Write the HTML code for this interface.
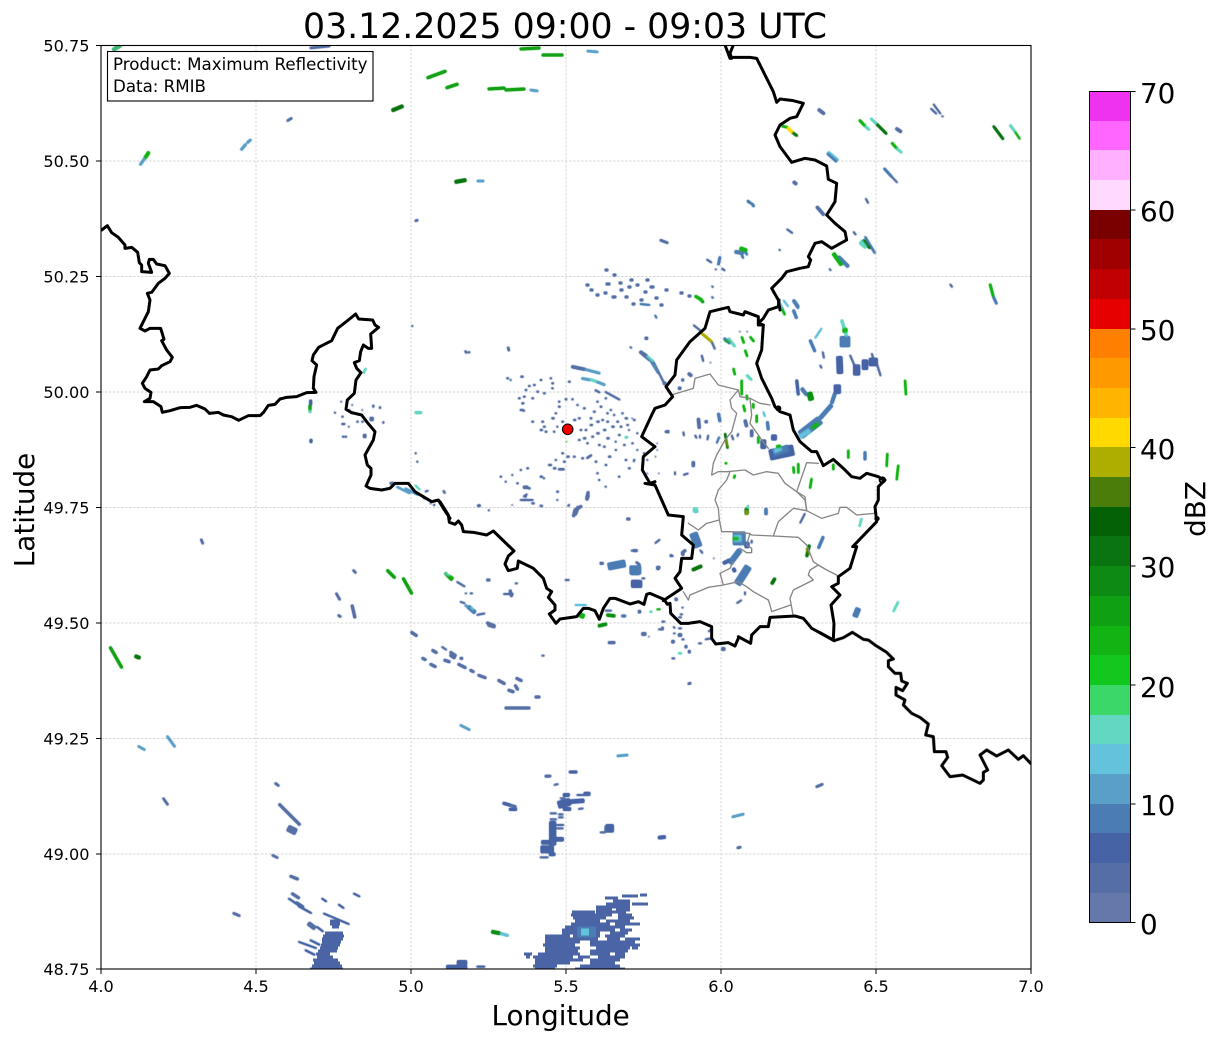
<!DOCTYPE html>
<html lang="en"><head><meta charset="utf-8"><title>Radar</title>
<style>
html,body{margin:0;padding:0;background:#fff;width:1219px;height:1040px;overflow:hidden}
svg{display:block}
text{font-family:"DejaVu Sans","Liberation Sans",sans-serif;fill:#000}
.t{font-size:16.67px}
.l{font-size:16.1px}
.c{font-size:27.8px}
.p path{fill:none}
.bk{stroke:#000;stroke-width:9;stroke-linejoin:round;stroke-linecap:round;fill:none}
.gy{stroke:#868686;stroke-width:4;stroke-linejoin:round;stroke-linecap:round;fill:none}
</style></head><body>
<svg width="1219" height="1040" viewBox="0 0 1219 1040" xmlns="http://www.w3.org/2000/svg">
<rect width="1219" height="1040" fill="#fff"/>
<defs><clipPath id="ax"><rect x="101" y="45" width="930" height="924"/></clipPath>
<filter id="fat" filterUnits="userSpaceOnUse" x="0" y="0" width="1219" height="1040" color-interpolation-filters="sRGB">
<feGaussianBlur in="SourceGraphic" stdDeviation=".7"/>
<feComponentTransfer><feFuncA type="linear" slope="3"/></feComponentTransfer>
</filter></defs>
<text x="303" y="38" style="font-size:34.7px">03.12.2025 09:00 - 09:03 UTC</text>

<!-- grid -->
<g stroke="#c9c9c9" stroke-width=".7" stroke-dasharray="2.500 1.500" fill="none">
<path d="M256 45V969M411 45V969M566 45V969M721 45V969M876 45V969"/>
<path d="M101 161H1031M101 276.500H1031M101 392H1031M101 507.500H1031M101 623H1031M101 738.500H1031M101 854H1031"/>
</g>

<g clip-path="url(#ax)" class="p">
<g filter="url(#fat)">
<!-- absolute-position echoes -->
<g>
<path stroke="#3cb878" stroke-width="3" d="M113 50L121 45"/>
<path stroke="#5a9fc8" stroke-width="1.800" d="M140 165L145 158M241 150L246 144M247 143L251 139.500"/>
<path stroke="#12b414" stroke-width="2.500" d="M145 158L149 152"/>
<path stroke="#5670a6" stroke-width="1.500" d="M287 121L292 118M310 48L330 46M201 539L203 544M163 798L168 805M233 913L240 916M272 855L278 858M275 783L279 786M545 776L551 776M569 772L576 772M660 838L665 837M737 848L741 847M816 787L823 784M353 570L356 573M336 593L340 600M338 615L341 617M415 221L418 220M465 351L467 353M508 347L509 351M688 684L691 683M660 240L668 243M636 562L640 565"/>
<path stroke="#0a7510" stroke-width="2.800" d="M392 110.500L403 106M455 182L466 180M135 656L140 658"/>
<path stroke="#12a014" stroke-width="2" d="M427 78L446 71M446 88L458 84M488 89L505 88M505 90L525 89M110 647L122 668M542 55L563 55M520 49L540 48M387 570L395 578M403 578L412 594M445 573L452 580"/>
<path stroke="#5a9fc8" stroke-width="1.500" d="M530 90L538 91M587 51L598 52M477 181L484 181M167 736L175 747M138 746L145 750M617 756L628 755M465 605L475 612M460 725L470 730M732 817L744 814"/>
<path stroke="#5670a6" stroke-width="2" d="M503 803L516 807M279 804L300 825M352 605L355 618M488 625L495 627M411 632L417 636M505 708L530 708M535 697L540 697M422 658L426 660M430 664L436 667M444 660L450 662M458 664L466 668M478 675L486 678M498 680L505 684M516 678L522 681M508 690L514 692M450 652L456 656M432 650L437 653M470 670L474 672M515 685L518 690M590 290h3M586 285h3M605 270h3M613 275h3M606 284h4M619 283h3M628 287h3M636 285h3M650 287h4M596 295h3M604 293h3M612 297h4M625 297h3M640 300h3M632 304h3M655 298h3M660 305h3M665 290h3M680 293h3M688 296h3M620 290h3M644 292h3M630 280h3M646 280h3"/>
<path stroke="#5670a6" stroke-width="6" d="M288 828L296 832M605 829h7"/>
<path stroke="#12b414" stroke-width="2" d="M695 296L702 300"/>
</g>

<!-- zoom 8 region -->
<g transform="translate(700 40) scale(.33333)">
<path stroke="#5670a6" stroke-width="7" d="M355 208L373 222M588 265L604 276M280 425L290 433M350 500L372 525"/>
<path stroke="#5670a6" stroke-width="3" d="M692 205L710 222M700 192L722 222M725 228L730 230M260 567L278 580M460 575L468 585M497 475L505 490M237 628L241 632M750 732L757 742M388 686L393 692M575 410L592 428M35 738L40 742M35 770L40 775M20 658L35 668M65 685L75 692M45 688h5"/>
<path stroke="#12b414" stroke-width="5" d="M245 258L262 262M478 240L495 258M575 308L590 325M870 732L880 770M120 628L140 632"/>
<path stroke="#ffd900" stroke-width="6" d="M262 262L278 278"/>
<path stroke="#0a7510" stroke-width="5" d="M278 278L292 288M530 252L560 282M880 258L910 298"/>
<path stroke="#64d7c3" stroke-width="5" d="M495 258L508 270M590 325L605 338M930 255L945 275M512 235L530 252"/>
<path stroke="#12b414" stroke-width="3" d="M945 275L960 298M0 780L10 785"/>
<path stroke="#4b7db4" stroke-width="5" d="M382 340L410 365M552 385L575 410M142 482L152 490M155 490L162 500M880 770L890 792M60 650L55 675M280 782L295 805"/>
<path stroke="#64c3dc" stroke-width="3" d="M385 335L415 360M250 780L265 800M285 782L292 795"/>
<path stroke="#64d7c3" stroke-width="14" d="M482 605L500 620"/>
<path stroke="#4b7db4" stroke-width="4" d="M495 590L525 640M125 645L130 655M135 635L142 645"/>
<path stroke="#0a7510" stroke-width="5" d="M490 600L510 625"/>
<path stroke="#4b7db4" stroke-width="8" d="M415 650L445 680M105 635L130 640"/>
<path stroke="#12b414" stroke-width="9" d="M400 640L425 675M120 625L140 632"/>
</g>

<!-- zoom 4 region -->
<g transform="translate(630 300) scale(.33333)">
<path stroke="#4b7db4" stroke-width="6" d="M490 0L505 20M490 30L500 55M282 115L300 130M265 340L270 365M412 365L415 390M540 120L555 155M705 455L705 480"/>
<path stroke="#64c3dc" stroke-width="3" d="M445 0L460 30M555 115L575 85M400 335L405 350"/>
<path stroke="#12b414" stroke-width="4" d="M455 25L465 45M335 110L342 130M360 110L372 125M345 150L352 170M310 205L315 225M335 240L335 285M350 285L352 300M370 310L370 325M380 345L380 368M385 410L385 430M610 492L610 510M655 450L655 475M772 460L770 500M825 240L828 285M805 495L800 540M545 535L540 565M490 500L492 520M505 490L505 520M285 490h6M315 525L312 535M340 315L345 335"/>
<path stroke="#5670a6" stroke-width="3" d="M190 75L215 95M245 125L255 148M215 165L220 185M240 188h3M328 95h3M350 95h3M160 395L162 408M195 405L200 415M210 405L210 415M235 405L232 420M305 405L310 420M325 400L322 410M578 155L582 175M570 195L575 205M660 165L675 200M740 190L752 228M725 160L730 175M0 140L5 145M5 355h3M80 430h3M80 450h3M75 470h3M10 485h3M85 520h3M50 520h3M135 515V525M160 525L175 520"/>
<path stroke="#aeae00" stroke-width="5" d="M215 100L245 125"/>
<path stroke="#64d7c3" stroke-width="5" d="M295 115L315 140M350 225L365 240M70 195L85 215"/>
<path stroke="#12b414" stroke-width="4" d="M285 122L300 125"/>
<path stroke="#5670a6" stroke-width="7" d="M205 355L208 385M225 365h7M110 395h7M345 360L350 380M365 390L365 410M30 155L60 180M100 250h8M145 265h8M155 240h6M175 220L185 228M45 115h8M190 485L190 500"/>
<path stroke="#4b7db4" stroke-width="3" d="M60 180L85 220M75 45L80 55M30 12L60 15M260 430L268 410"/>
<path stroke="#0a7510" stroke-width="4" d="M285 400L293 445"/>
<path stroke="#aeae00" stroke-width="2" d="M288 415L293 440"/>
<path stroke="#12a014" stroke-width="6" d="M215 5h6"/>
<path stroke="#4664a5" stroke-width="14" d="M400 420V445M432 405V420"/>
<path stroke="#4664a5" stroke-width="30" d="M420 465L490 450"/>
<path stroke="#4b7db4" stroke-width="20" d="M430 460L475 445"/>
<path stroke="#64c3dc" stroke-width="12" d="M432 455L455 445"/>
<path stroke="#12b414" stroke-width="8" d="M440 440H452"/>
<path stroke="#4b7db4" stroke-width="24" d="M512 405L570 360"/>
<path stroke="#64c3dc" stroke-width="14" d="M510 410L540 390"/>
<path stroke="#12b414" stroke-width="12" d="M545 385L565 370"/>
<path stroke="#4b7db4" stroke-width="10" d="M570 355L605 315"/>
<path stroke="#4b7db4" stroke-width="8" d="M605 310L615 280"/>
<path stroke="#4664a5" stroke-width="18" d="M622 255V280"/>
<path stroke="#4664a5" stroke-width="6" d="M500 240L505 285"/>
<path stroke="#4b7db4" stroke-width="8" d="M515 265L530 285"/>
<path stroke="#0a9014" stroke-width="14" d="M538 278L544 300"/>
<path stroke="#64d7c3" stroke-width="6" d="M635 60L650 110"/>
<path stroke="#12b414" stroke-width="12" d="M645 85V97"/>
<path stroke="#4b7db4" stroke-width="28" d="M645 110V140"/>
<path stroke="#4664a5" stroke-width="16" d="M628 170L630 220M705 180V208"/>
<path stroke="#4664a5" stroke-width="18" d="M680 195V225"/>
<path stroke="#4664a5" stroke-width="24" d="M730 175V197"/>
</g>

<!-- zoom 5 region -->
<g transform="translate(630 480) scale(.33333)">
<path stroke="#64c3dc" stroke-width="10" d="M195 85L200 97"/>
<path stroke="#4b7db4" stroke-width="7" d="M408 85V104"/>
<path stroke="#0a7510" stroke-width="9" d="M350 85V103"/>
<path stroke="#aeae00" stroke-width="5" d="M350 90V103"/>
<path stroke="#64d7c3" stroke-width="4" d="M355 76L351 86"/>
<path stroke="#4b7db4" stroke-width="22" d="M190 160L205 200"/>
<path stroke="#4b7db4" stroke-width="24" d="M3 272H28"/>
<path stroke="#5670a6" stroke-width="18" d="M5 310H28"/>
<path stroke="#5670a6" stroke-width="3" d="M3 212H18M75 190L90 178M35 295H45M125 228h5M210 210L218 220M250 235h3M345 335V345M320 370L335 360M510 130L525 100M365 180V190M175 610H183M155 383h5M150 403H158M145 412H155"/>
<path stroke="#5670a6" stroke-width="8" d="M80 265h8M155 222h7M25 395h7M135 358h7M275 507h10M145 465h10M95 445h5M35 462H48M125 485h8M165 500h6M175 515h6"/>
<path stroke="#0a7510" stroke-width="7" d="M187 270L215 258M435 295L425 312"/>
<path stroke="#4b7db4" stroke-width="38" d="M310 175H345"/>
<path stroke="#64c3dc" stroke-width="22" d="M312 175H335"/>
<path stroke="#12b414" stroke-width="10" d="M310 176H326"/>
<path stroke="#4664a5" stroke-width="16" d="M345 195h12"/>
<path stroke="#4b7db4" stroke-width="14" d="M330 210L300 250"/>
<path stroke="#4664a5" stroke-width="8" d="M280 250L300 240M310 265L315 275"/>
<path stroke="#4b7db4" stroke-width="20" d="M355 260L322 312"/>
<path stroke="#0a7510" stroke-width="6" d="M538 195L530 230"/>
<path stroke="#aeae00" stroke-width="2" d="M528 205L540 225"/>
<path stroke="#4b7db4" stroke-width="6" d="M580 170L565 205"/>
<path stroke="#64d7c3" stroke-width="4" d="M695 115L688 140M60 395h6M145 520h10M805 365L790 395"/>
<path stroke="#12b414" stroke-width="3" d="M85 388h6"/>
<path stroke="#4b7db4" stroke-width="14" d="M685 385L675 410"/>
<path stroke="#5670a6" stroke-width="3" d="M130 440L135 445M145 445h10M130 460h6M155 478h8M205 490H215M235 455L245 448M225 478L245 475M125 535h10M55 470h3M95 425h10M85 448H100"/>
</g>

<!-- zoom 10 region -->
<g transform="translate(440 490) scale(.33333)">
<path stroke="#64d7c3" stroke-width="4" d="M15 250L28 258"/>
<path stroke="#12b414" stroke-width="4" d="M28 258L40 265"/>
<path stroke="#5670a6" stroke-width="3" d="M50 275L75 290M60 335L75 340M75 310h5M110 375L135 370M90 310h8M225 280h8M190 312H220M5 470L20 480M305 497h8M375 270H388M350 5h5M385 45V50M145 62h3M300 47h5M215 45h3M240 30H280M250 20L262 12"/>
<path stroke="#5670a6" stroke-width="6" d="M140 270h10M140 398L165 408M30 495L45 505M60 505h8M115 47h6M210 300L215 320M400 80L405 60L425 48M440 25L445 5M480 220H490M580 182H592M560 87H570M650 232h10M595 365h6M725 190L737 180M690 197h6M505 458H525"/>
<path stroke="#4b7db4" stroke-width="10" d="M85 350L105 368"/>
<path stroke="#64d7c3" stroke-width="5" d="M92 352L100 360M630 365h5"/>
<path stroke="#64c3dc" stroke-width="3" d="M405 345H440"/>
<path stroke="#5670a6" stroke-width="3" d="M495 362H515"/>
<path stroke="#4b7db4" stroke-width="6" d="M545 378H557"/>
<path stroke="#12b414" stroke-width="12" d="M415 372L432 380"/>
<path stroke="#0a9014" stroke-width="7" d="M500 375L525 378M475 408L500 402"/>
<path stroke="#12b414" stroke-width="3" d="M650 358h5"/>
<path stroke="#4b7db4" stroke-width="20" d="M505 230L555 220"/>
<path stroke="#4b7db4" stroke-width="24" d="M570 240H602"/>
<path stroke="#4664a5" stroke-width="20" d="M575 282H605"/>
<path stroke="#64d7c3" stroke-width="12" d="M760 60h12"/>
</g>

<!-- zoom 9 region -->
<g transform="translate(90 220) scale(.33333)">
<path stroke="#4664a5" stroke-width="6" d="M662 540V555M663 658V668"/>
<path stroke="#12a014" stroke-width="6" d="M660 555V570"/>
<path stroke="#64d7c3" stroke-width="6" d="M660 570V578M975 578H995"/>
<path stroke="#64d7c3" stroke-width="4" d="M828 445L820 460"/>
<path stroke="#5670a6" stroke-width="10" d="M840 597h10M820 648h8"/>
<path stroke="#5670a6" stroke-width="4" d="M733 578h4M755 590h5M785 578h5M800 605h5M815 605h5M757 650h5M765 650h5M850 555V562M870 560V566M880 605V610M755 612h10M975 700h4M980 725h4M965 318h4M1135 397h5M1060 812L1065 820M1162 857h6M752 545h3M785 555h3M815 570h3M777 570h3M775 620h3M1030 855h5"/>
<path stroke="#5670a6" stroke-width="6" d="M900 790H912"/>
<path stroke="#5a9fc8" stroke-width="4" d="M920 800L960 820M945 805L985 825"/>
<path stroke="#64d7c3" stroke-width="3" d="M975 795L990 810"/>
<path stroke="#5670a6" stroke-width="3" d="M1005 815L1015 812M1020 850h4M1000 835h6M1195 870h3"/>
</g>

<!-- zoom 6 region: speckle -->
<g transform="translate(490 350) scale(.33333)">
<path stroke="#5670a6" stroke-width="4" d="M50 85h6M60 90h4M92 80h8M150 90h6M180 85h5M185 100h6M130 105h6M115 108h6M105 120h6M85 145h6M100 140h6M125 145h6M160 130h6M140 125h6M185 115h5M95 160h7M90 180h10M100 182h4M235 95h6M205 155h5M225 148h6M245 148h5M205 170h6M260 165h5M125 215h6M155 215h6M160 230h6M150 240h8M165 245h6M185 205h8M195 190h5M215 215h6M200 230h4M190 245h5M250 210h8M265 205h6M270 240h6M285 240h6M300 225h8M320 215h8M335 210h6M350 190h5M370 195h5M395 190h5M405 205h8M430 210h6M410 225h6M365 230h8M340 240h8M320 250h8M305 260h6M280 265h8M265 270h6M290 280h5M350 265h8M385 255h6M425 280h5M400 285h6M375 300h5M340 290h6M325 285h6M290 325L305 315M355 320h8M315 335h6M345 345h6M405 330h6M415 355h6M385 380h5M320 370h5M325 390h5M345 410h4M430 330h5M215 310h6M230 320h8M250 320h6M275 325h6M195 330h5M220 335h6M175 345h10M190 355h8M205 358h18M110 355h6M90 360h5M150 380h8M160 385h4M30 380h5M45 395h4M65 375h4M80 400h5M115 415h6M105 440h4M125 460h8M100 450h6M150 468h8M200 425h6M200 450h4M235 465h4M280 175h6M310 185h6M330 170h6M345 145h5M320 155h5M300 205h6M380 215h6M360 180h5M390 230h6M415 240h4M350 215h6M375 275h4M440 300h4M440 250h4M460 310h5M470 330h4M525 245h6"/>
<path stroke="#5670a6" stroke-width="7" d="M245 50L285 58M100 412h14M450 5L470 18M295 435L290 450M265 470L255 495"/>
<path stroke="#5a9fc8" stroke-width="5" d="M285 58L330 70M275 85L300 90M320 95L345 105"/>
<path stroke="#64d7c3" stroke-width="5" d="M300 88L320 95M470 18L490 35M405 262h8"/>
<path stroke="#5670a6" stroke-width="3" d="M345 125L390 150M490 35L525 105M315 120L330 128"/>
<path stroke="#12b414" stroke-width="2" d="M228 275h3"/>
</g>

<!-- zoom 7 streaks -->
<g transform="translate(260 870) scale(.33333)">
<path stroke="#4664a5" stroke-width="3" d="M85 85L130 115M115 108L155 130M185 85L200 95M235 103L252 115M280 70L300 80M190 130L268 163M170 170L190 185M115 215L170 235M150 210L180 225M135 240L165 255M650 290H675"/>
<path stroke="#5670a6" stroke-width="6" d="M90 18L115 28M95 70L118 85"/>
<path stroke="#4b6ba8" stroke-width="7" d="M108 98L130 112"/>
<path stroke="#5670a6" stroke-width="11" d="M145 160L165 175"/>
<path stroke="#4664a5" stroke-width="12" d="M560 292H620"/>
<path stroke="#4664a5" stroke-width="12" d="M592 278H620"/>
<path stroke="#0a9014" stroke-width="8" d="M695 185L720 190"/>
<path stroke="#64c3dc" stroke-width="6" d="M720 190L745 197"/>
</g>

<!-- zoom 12 -->
<g transform="translate(480 760) scale(.33333)">
<path stroke="#4664a5" stroke-width="6" d="M270 36H291M70 130L90 135M88 148H110"/>
<path stroke="#5670a6" stroke-width="3" d="M195 50H210M222 75L235 72M95 138H102M210 160H230M235 163H250M235 172H250M210 178H230M230 195H252M230 205H250M180 292H205M360 217H376M295 147L310 145M290 105H330M240 115H255"/>
<path stroke="#4664a5" stroke-width="8" d="M250 105H268M250 147H272M535 233L556 231M208 283H225"/>
<path stroke="#4664a5" stroke-width="20" d="M235 135L270 125"/>
<path stroke="#4664a5" stroke-width="10" d="M270 125L312 122"/>
<path stroke="#4664a5" stroke-width="6" d="M312 100H330"/>
<path stroke="#4664a5" stroke-width="18" d="M218 185V255"/>
<path stroke="#4664a5" stroke-width="10" d="M225 238H250M185 247H210"/>
<path stroke="#4664a5" stroke-width="20" d="M183 268H220"/>
<path stroke="#4664a5" stroke-width="22" d="M378 205H400"/>
</g>
</g>

<!-- bottom blobs as raster rows (no fattening so gaps survive) -->
<path stroke="#4a64a5" stroke-width="3.100" d="M640 895H647M622 896H638M605 898H618M613 901H630M606 904H630M632 904H648M596 907H630M596 910H612M616 910H630M572 912H595M596 912H626M571 915H612M618 915H632M573 918H606M618 918H634M575 921H600M606 921H630M571 924H610M615 924H640M565 927H625M562 930H615M620 930H632M562 933H600M610 933H628M545 936H570M573 936H600M605 936H625M545 939H598M607 939H620M625 939H640M545 942H580M590 942H635M543 945H575M590 945H640M545 948H580M596 948H630M632 948H638M545 951H578M590 951H628M524 954H532M538 954H580M590 954H610M615 954H625M526 957H530M533 957H573M578 957H590M598 957H625M535 960H583M590 960H620M535 963H570M590 963H615M533 966H557M580 966H620M535 969H555M575 969H625"/>
<path stroke="#4a64a5" stroke-width="3.100" d="M330 921H340M330 924H340M332 927H339M325 933H343M323 936H344M322 939H343M322 942H341M321 945H340M320 948H338M318 951H337M316 954H330M317 957H333M313 960H338M314 963H340M312 966H342M310 969H343"/>
<path stroke="#4b7db4" stroke-width="11" d="M577 932H596"/>
<path stroke="#64c3dc" stroke-width="7" d="M581 932H589"/>

<!-- grey canton borders -->
<g transform="translate(630 300) scale(.33333)">
<path class="gy" d="M130 283L190 265L195 235L240 222L265 255L325 270L330 290L360 295L390 310L420 315"/>
<path class="gy" d="M325 270L300 300L305 325L320 340L305 395L285 420L260 465L250 490L245 525L265 515L290 515L345 510L370 525L410 515L445 520L465 550L500 575L525 600L530 632"/>
<path class="gy" d="M360 295L365 345L360 370L385 405L395 420L415 445"/>
<path class="gy" d="M500 575L530 488L565 490"/>
<path class="gy" d="M300 515L290 540L265 570L255 600L265 625L268 660"/>
</g>
<g transform="translate(630 480) scale(.33333)">
<path class="gy" d="M268 120L230 130L205 150L175 130"/>
<path class="gy" d="M268 120L275 155L305 155L355 160L365 165L430 168L505 172L530 195L550 245L565 255L540 270L535 285L550 300L490 330L480 355L490 410"/>
<path class="gy" d="M430 168L445 125L490 85L530 92L575 115L625 100L630 82L650 82L680 105L735 100"/>
<path class="gy" d="M530 92L525 50L500 35"/>
<path class="gy" d="M482 375L425 395L420 375L415 360L370 335L350 320L325 305L280 315L235 322L180 345L175 360L160 335"/>
<path class="gy" d="M280 315L270 280L300 265L310 245"/>
<path class="gy" d="M565 255L590 270L620 285L625 295"/>
<path class="gy" d="M360 160L350 195L365 205L365 218L350 218L330 205"/>
</g>

<!-- black borders -->
<g transform="translate(90 220) scale(.33333)">
<path class="bk" d="M35 30L52 17L65 38L85 52L105 75L105 85L125 82L143 97L148 128L155 135L155 155L185 157L175 130L178 118L190 118L200 132L225 137L238 160L225 175L205 190L185 217L172 220L180 240L175 275L165 295L150 325L165 333L180 325L212 325L222 358L215 362L230 390L247 412L240 425L215 437L205 447L180 450L170 470L157 490L165 505L183 517L180 535L163 545L190 545L213 560L217 577L240 572L270 563L300 562L320 556L345 567L358 580L385 577L400 585L425 590L446 601L475 587L510 587L520 578L535 556L555 553L570 537L590 532L620 530L650 518L678 517L670 505L672 470L680 435L666 422L670 405L686 382L725 362L743 325L775 300L797 282L806 297L848 300L855 315L866 322L842 342L845 385L835 385L820 375L812 395L808 422L793 428L800 445L813 458L798 480L793 520L772 540L768 568L785 578L815 585L830 605L855 635L850 660L825 705L832 735L843 745L843 765L828 798L840 805L875 810L900 805L915 790L955 790L975 815L1000 830L1025 845L1045 840L1060 865L1080 895"/>
</g>
<g transform="translate(440 490) scale(.33333)">
<path class="bk" d="M0 35L25 75L28 97L45 103L55 93L65 105L70 125L100 127L140 135L160 123L222 183L205 198L195 222L205 242L232 235L235 213L280 235L310 265L320 295L335 305L325 322L345 345L345 360L328 372L348 400L360 387L410 380L430 355L445 355L465 362L478 388L490 355L510 325L525 325L570 342L595 335L612 343L620 313L630 310L672 328L682 343L690 340L692 370L722 400L745 400L780 395L815 410L815 445L827 462L865 458L885 468L895 445"/>
</g>
<g transform="translate(630 480) scale(.33333)">
<path class="bk" d="M325 470L362 490L365 465L390 440L415 440L420 412L495 408L520 415L545 445L610 480"/>
<path class="bk" d="M610 480L612 430L603 375L630 345L605 320L625 310L625 290L660 265L680 200L668 200L740 125L735 80L745 60L745 20L765 0"/>
<path class="bk" d="M45 10L75 15L115 105L160 110L155 165L190 195L185 235L155 235L150 275L135 295L155 325L100 362"/>
<circle cx="741" cy="116" r="8" fill="#000"/>
</g>
<g transform="translate(820 600) scale(.33333)">
<path class="bk" d="M42 122L70 113L97 97L130 118L145 120L165 135L200 157L220 177L205 182L205 200L225 220L242 220L245 243L262 250L248 272L228 262L228 285L255 300L250 315L275 340L300 352L325 372L317 405L340 410L343 455L378 455L383 472L365 497L390 530L428 525L480 550L490 540L490 517L503 510L480 465L500 450L530 468L565 450L595 478L610 467L632 490"/>
<path class="bk" d="M0 98L42 122"/>
</g>
<g transform="translate(630 300) scale(.33333)">
<path class="bk" d="M760 540L745 530L710 520L690 535L665 530L640 505L610 478L580 497L560 455L545 455L510 425L490 390L480 345L450 335L435 320L425 295L410 265L395 235L380 190L395 150L400 75L385 70L400 55L415 30L445 20L447 0"/>
<path class="bk" d="M400 75L385 75L385 50L345 35L340 45L300 35L295 22L240 35L225 85L180 125L140 180L135 225L108 260L128 290L105 315L75 325L65 345L35 410L75 440L40 470L37 510L60 550L75 545"/>
<circle cx="445" cy="325" r="9" fill="#000"/>
<circle cx="757" cy="540" r="8" fill="none" stroke="#000" stroke-width="6"/>
</g>
<g transform="translate(700 40) scale(.33333)">
<path class="bk" d="M240 810L235 780L215 745L245 715L260 695L300 685L325 680L332 660L325 650L345 610L365 605L395 625L440 600L435 575L405 550L380 525L405 485L410 430L385 418L380 378L345 360L315 355L275 367L240 320L225 285L240 255L270 235L290 230L310 190L280 182L240 177L230 187L220 155L170 55L150 52L100 52L90 55L75 15"/>
<path class="bk" d="M100 15L90 40L95 55"/>
</g>
<circle cx="567.700" cy="429.300" r="5.300" fill="#f00000" stroke="#000" stroke-width="1"/>
</g>

<!-- annotation box -->
<rect x="107.500" y="51.500" width="265.500" height="49.500" fill="#fff" fill-opacity=".85" stroke="#000" stroke-width="1.100"/>
<text class="t" x="113" y="70">Product: Maximum Reflectivity</text>
<text class="t" x="113" y="92">Data: RMIB</text>

<!-- axes frame and ticks -->
<rect x="101" y="45.500" width="930" height="923.500" fill="none" stroke="#000" stroke-width="1.100"/>
<g stroke="#000" stroke-width="1" fill="none">
<path d="M101 969v5M256 969v5M411 969v5M566 969v5M721 969v5M876 969v5M1031 969v5"/>
<path d="M101 45.500h-5M101 161h-5M101 276.500h-5M101 392h-5M101 507.500h-5M101 623h-5M101 738.500h-5M101 854h-5M101 969h-5"/>
</g>
<g class="l" text-anchor="end">
<text x="89.500" y="51.500">50.75</text><text x="89.500" y="167">50.50</text><text x="89.500" y="282.500">50.25</text><text x="89.500" y="398">50.00</text><text x="89.500" y="513.500">49.75</text><text x="89.500" y="629">49.50</text><text x="89.500" y="744.500">49.25</text><text x="89.500" y="860">49.00</text><text x="89.500" y="975">48.75</text>
</g>
<g class="l" text-anchor="middle">
<text x="101" y="992">4.0</text><text x="256" y="992">4.5</text><text x="411" y="992">5.0</text><text x="566" y="992">5.5</text><text x="721" y="992">6.0</text><text x="876" y="992">6.5</text><text x="1031" y="992">7.0</text>
</g>
<text x="491.500" y="1025" style="font-size:27.8px">Longitude</text>
<text transform="translate(34 510) rotate(-90)" text-anchor="middle" style="font-size:27.8px">Latitude</text>

<!-- colorbar -->
<g shape-rendering="crispEdges">
<rect x="1090" y="91.500" width="40" height="30.500" fill="#ef32ef"/>
<rect x="1090" y="121" width="40" height="30" fill="#ff66ff"/>
<rect x="1090" y="150" width="40" height="30" fill="#ffb0ff"/>
<rect x="1090" y="180" width="40" height="30" fill="#ffd9ff"/>
<rect x="1090" y="210" width="40" height="30" fill="#7a0000"/>
<rect x="1090" y="239" width="40" height="30" fill="#a00000"/>
<rect x="1090" y="269" width="40" height="30" fill="#c00000"/>
<rect x="1090" y="299" width="40" height="30" fill="#e60000"/>
<rect x="1090" y="329" width="40" height="30" fill="#ff7f00"/>
<rect x="1090" y="358" width="40" height="30" fill="#ff9900"/>
<rect x="1090" y="388" width="40" height="30" fill="#ffb400"/>
<rect x="1090" y="418" width="40" height="30" fill="#ffd900"/>
<rect x="1090" y="447" width="40" height="30" fill="#aeae00"/>
<rect x="1090" y="477" width="40" height="30" fill="#4a7d0a"/>
<rect x="1090" y="507" width="40" height="30" fill="#056105"/>
<rect x="1090" y="536" width="40" height="30" fill="#0a7510"/>
<rect x="1090" y="566" width="40" height="30" fill="#0c8a14"/>
<rect x="1090" y="596" width="40" height="30" fill="#0fa014"/>
<rect x="1090" y="626" width="40" height="30" fill="#12b414"/>
<rect x="1090" y="655" width="40" height="30" fill="#12c81e"/>
<rect x="1090" y="685" width="40" height="30" fill="#3cd769"/>
<rect x="1090" y="715" width="40" height="30" fill="#64d7c3"/>
<rect x="1090" y="744" width="40" height="30" fill="#64c3dc"/>
<rect x="1090" y="774" width="40" height="30" fill="#5a9fc8"/>
<rect x="1090" y="804" width="40" height="30" fill="#4b7db4"/>
<rect x="1090" y="833" width="40" height="30" fill="#4664a5"/>
<rect x="1090" y="863" width="40" height="30" fill="#556ea5"/>
<rect x="1090" y="893" width="40" height="30" fill="#6478aa"/>
</g>
<rect x="1089.500" y="91.500" width="41" height="831" fill="none" stroke="#000" stroke-width="1"/>
<path stroke="#000" stroke-width="1" fill="none" d="M1130.500 91.500h5M1130.500 210h5M1130.500 329h5M1130.500 447.500h5M1130.500 566h5M1130.500 685h5M1130.500 804h5M1130.500 922.500h5"/>
<g class="c">
<text x="1140" y="103">70</text><text x="1140" y="221">60</text><text x="1140" y="340">50</text><text x="1140" y="459">40</text><text x="1140" y="577">30</text><text x="1140" y="697">20</text><text x="1140" y="815">10</text><text x="1140" y="934">0</text>
</g>
<text transform="translate(1205 509) rotate(-90)" text-anchor="middle" style="font-size:27.8px">dBZ</text>
</svg>
</body></html>
